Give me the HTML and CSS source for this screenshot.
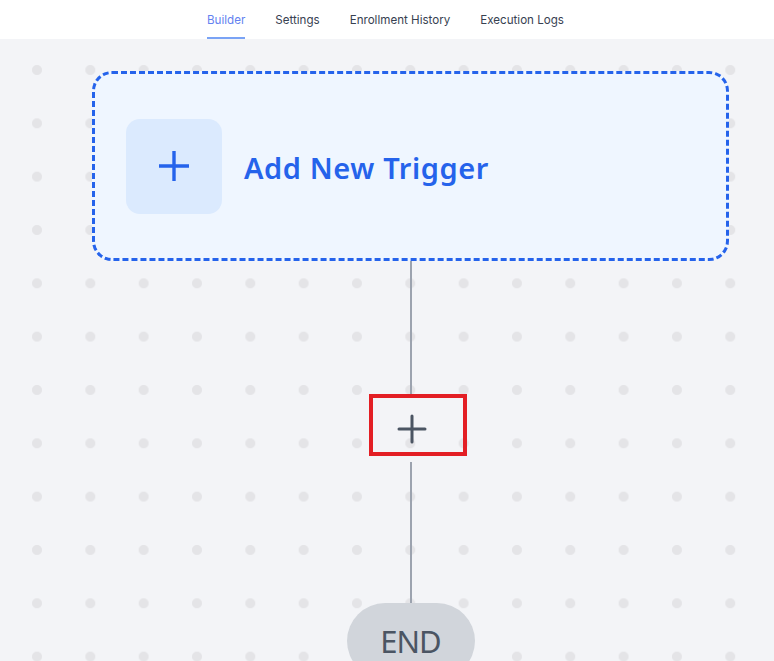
FILE: index.html
```html
<!DOCTYPE html>
<html lang="en">
<head>
<meta charset="utf-8">
<title>Workflow Builder</title>
<link rel="stylesheet" href="styles.css">
</head>
<body>
<header class="topbar">
  <nav class="tabs">
    <a class="tab active">Builder</a>
    <a class="tab">Settings</a>
    <a class="tab">Enrollment History</a>
    <a class="tab">Execution Logs</a>
  </nav>
</header>
<main class="canvas">
  <div class="flow">
    <div class="trigger">
      <div class="trigger-icon">
        <svg width="34" height="34" viewBox="0 0 34 34"><path d="M17 2V32M2 17H32" stroke="#2563eb" stroke-width="3.4" fill="none"/></svg>
      </div>
      <span class="trigger-label">Add New Trigger</span>
    </div>
    <div class="connector top"></div>
    <div class="add-step">
      <svg width="30" height="30" viewBox="0 0 30 30"><path d="M15 2V28M2 15H28" stroke="#4b5563" stroke-width="3" stroke-linecap="round" fill="none"/></svg>
    </div>
    <div class="connector bottom"></div>
    <div class="end">END</div>
  </div>
</main>
</body>
</html>
```
FILE: styles.css
```css
html, body {
  margin: 0;
  padding: 0;
  height: 100%;
  overflow: hidden;
}
body {
  font-family: Inter, "Noto Sans", sans-serif;
  background: #f3f4f7;
}
.topbar {
  height: 39px;
  background: #ffffff;
  display: flex;
  justify-content: center;
}
.tabs {
  display: flex;
  gap: 30px;
  padding-right: 3px;
}
.tab {
  font-size: 11.6px;
  color: #374151;
  padding-top: 3px;
  line-height: 34px;
  border-bottom: 2px solid transparent;
  cursor: pointer;
}
.tab.active {
  color: #6482f0;
  border-bottom-color: #7aa3f5;
}
.canvas {
  height: 622px;
  background-color: #f3f4f7;
  background-image: radial-gradient(circle, #e4e4e7 0, #e4e4e7 4.6px, transparent 5.4px);
  background-size: 53.33px 53.33px;
  background-position: 10.33px 4.33px;
  padding-top: 32px;
  padding-left: 92px;
  box-sizing: border-box;
}
.flow {
  width: 637px;
  display: flex;
  flex-direction: column;
  align-items: center;
}
.trigger {
  box-sizing: border-box;
  width: 637px;
  height: 190px;
  border: 3px dashed #2563eb;
  border-radius: 20px;
  background: #eff6ff;
  display: flex;
  align-items: center;
  padding-left: 31px;
  gap: 22px;
}
.trigger-icon {
  width: 96px;
  height: 95px;
  border-radius: 14px;
  background: #dbeafe;
  display: flex;
  align-items: center;
  justify-content: center;
}
.trigger-label {
  font-family: "Noto Sans", "Open Sans", sans-serif;
  font-weight: 600;
  font-size: 29px;
  letter-spacing: 0.6px;
  color: #2563eb;
  padding-top: 2px;
}
.connector {
  width: 2px;
  background: #9ca3af;
}
.connector.top {
  height: 133px;
}
.connector.bottom {
  height: 141px;
  margin-top: 6px;
}
.add-step {
  box-sizing: border-box;
  width: 98px;
  height: 62px;
  margin-left: 14px;
  border: 4px solid #e31e24;
  display: flex;
  align-items: center;
  justify-content: center;
  padding-right: 12px;
  padding-top: 8px;
}
.end {
  width: 128px;
  height: 76px;
  border-radius: 38px;
  background: #d1d5db;
  color: #4b5563;
  font-family: "Noto Sans", sans-serif;
  font-size: 31px;
  letter-spacing: -1px;
  display: flex;
  justify-content: center;
  align-items: center;
  flex-shrink: 0;
}
```
